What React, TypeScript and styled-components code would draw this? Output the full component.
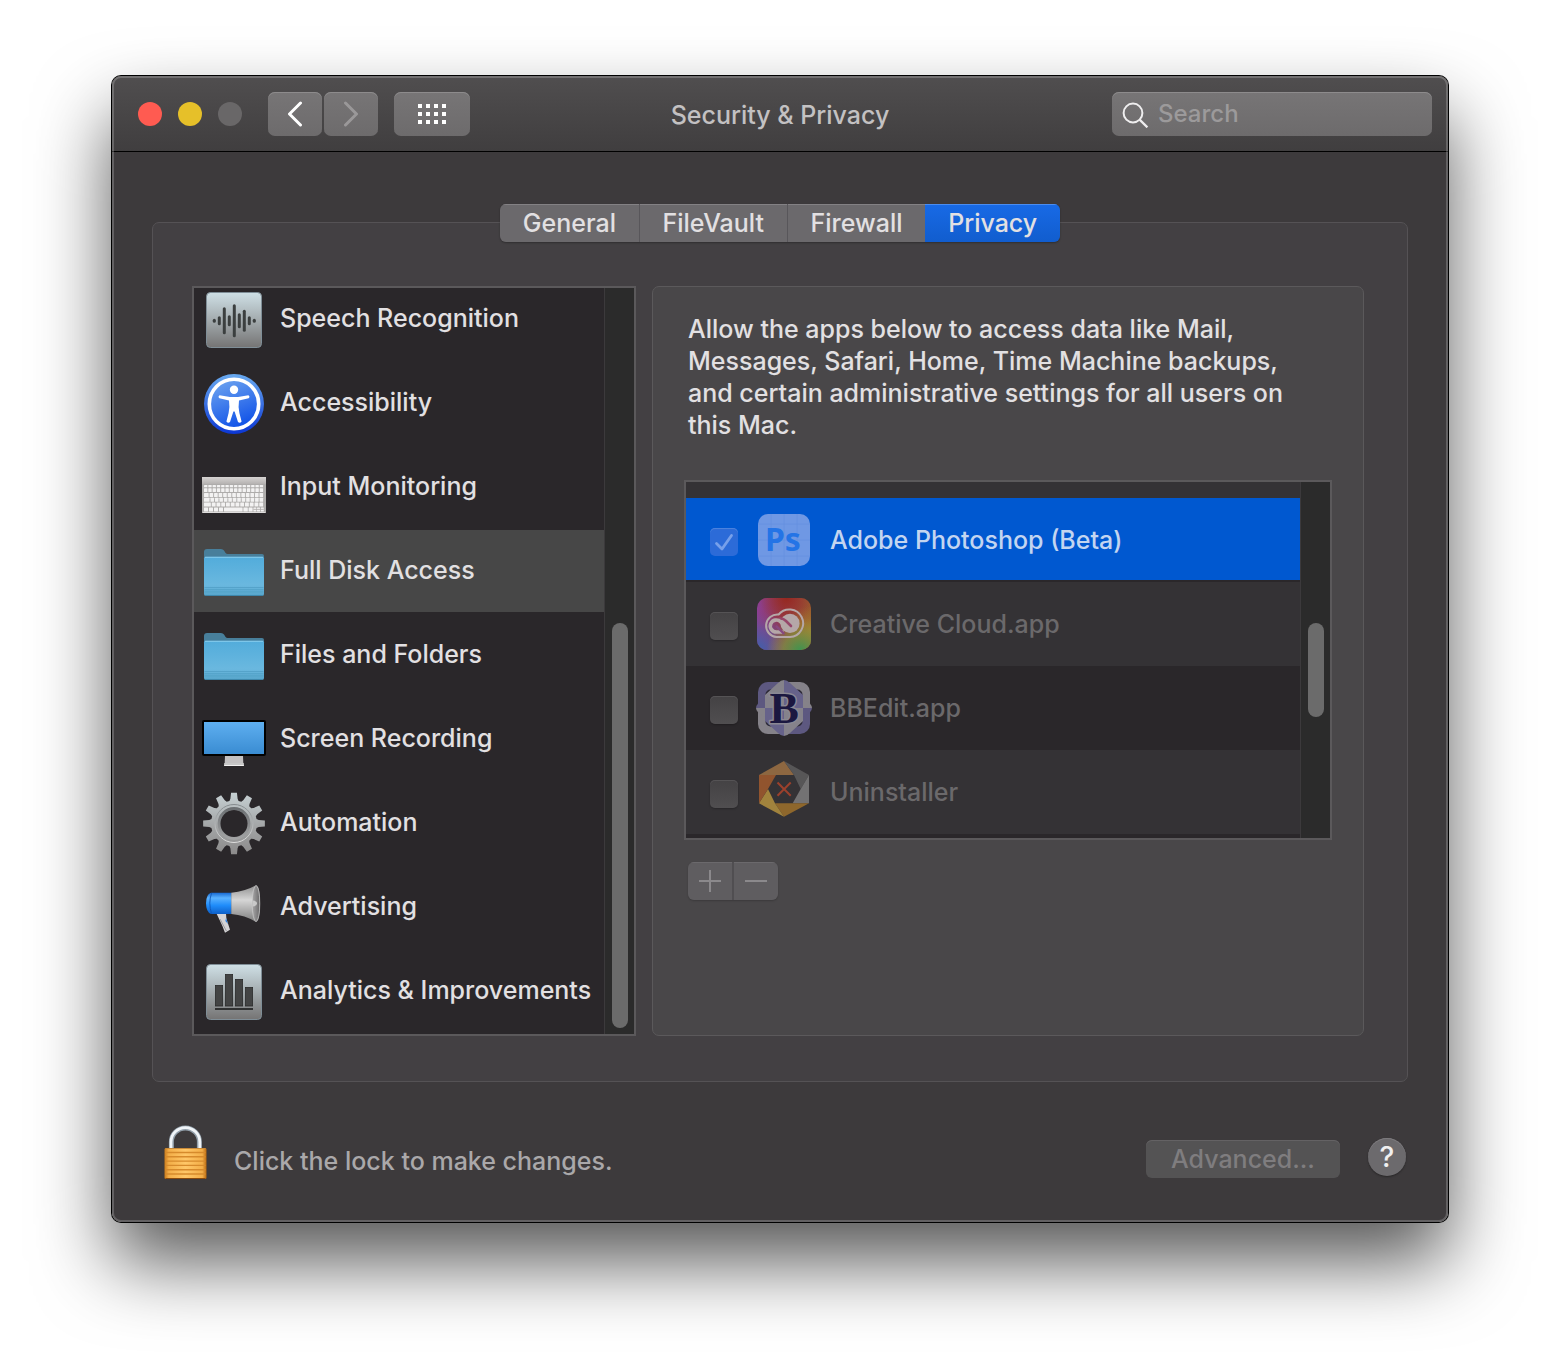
import React, { useState } from "react";
import styled, { createGlobalStyle, css } from "styled-components";

const GlobalStyle = createGlobalStyle`
  *, *::before, *::after { box-sizing: border-box; }
  body { margin: 0; background: #fff; }
  button, input { font: inherit; color: inherit; }
`;

const Desktop = styled.div`
  padding: 76px 112px 148px;
  font-family: Inter, "Liberation Sans", sans-serif;
  font-size: 25px;
  font-weight: 450;
  line-height: 32px;
  color: #e2e0e2;
`;

const Window = styled.section`
  position: relative;
  overflow: hidden;
  border-radius: 9px;
  background: #3d3a3c;
`;

const WindowShadow = styled.div`
  border-radius: 9px;
  box-shadow: 0 0 0 1px #000, 0 40px 76px rgba(0, 0, 0, 0.66);
`;

const WindowEdge = styled.div`
  position: absolute;
  inset: 0;
  border: 2px solid rgba(255, 255, 255, 0.2);
  border-radius: 9px;
  pointer-events: none;
`;

const TitleBar = styled.header`
  display: grid;
  grid-template-columns: 1fr auto 1fr;
  align-items: center;
  padding: 16px 16px 15px;
  border-bottom: 1px solid #000;
  background: linear-gradient(#504e4f, #403e3f);
`;

const TitleLeft = styled.div`
  display: flex;
  align-items: center;
  padding-left: 10px;
`;

const Lights = styled.div`
  display: flex;
  gap: 16px;
  margin-right: 26px;
`;

const Light = styled.button<{ $color: string }>`
  width: 24px;
  height: 24px;
  padding: 0;
  border: 0;
  border-radius: 50%;
  background: ${(p) => p.$color};
`;

const ToolButton = styled.button<{ $wide?: boolean }>`
  display: grid;
  place-items: center;
  width: ${(p) => (p.$wide ? 76 : 54)}px;
  height: 44px;
  padding: 0;
  border: 0;
  border-radius: 7px;
  background: linear-gradient(#777576, #6d6b6c);
  box-shadow: inset 0 1px #8d8b8c;
  margin-left: ${(p) => (p.$wide ? 14 : 0)}px;
`;

const NavGroup = styled.nav`
  display: flex;
  gap: 2px;
`;

const Title = styled.h1`
  margin: 0;
  padding-top: 2px;
  font-size: 25px;
  font-weight: 450;
  color: #c3c1c2;
`;

const SearchField = styled.label`
  display: flex;
  align-items: center;
  justify-self: end;
  gap: 8px;
  width: 320px;
  height: 44px;
  padding-left: 10px;
  border-radius: 7px;
  background: linear-gradient(#777576, #6d6b6c);
  box-shadow: inset 0 1px #8d8b8c;
`;

const SearchInput = styled.input`
  flex: 1;
  min-width: 0;
  padding: 0;
  border: 0;
  outline: 0;
  background: transparent;
  font-size: 24px;
  &::placeholder { color: #9c9a9b; opacity: 1; }
`;

const Body = styled.main`
  padding: 52px 40px 42px;
`;

const Tabs = styled.div`
  position: relative;
  z-index: 1;
  display: flex;
  width: 560px;
  height: 38px;
  margin: 0 auto -20px;
  border-radius: 6px;
  overflow: hidden;
  box-shadow: 0 1px 2px rgba(0, 0, 0, 0.3);
`;

const Tab = styled.button<{ $active: boolean; $joined: boolean }>`
  flex: auto;
  padding: 0;
  border: 0;
  border-right: ${(p) => (p.$joined ? 0 : 1)}px solid #58565a;
  background: #6b696c;
  box-shadow: inset 0 1px #838184;
  ${(p) =>
    p.$active &&
    css`
      border-right: 0;
      background: linear-gradient(#186ae6, #115dce);
      box-shadow: inset 0 1px #4b8df0;
    `}
`;

const Frame = styled.div`
  display: flex;
  gap: 16px;
  padding: 63px 43px 45px 39px;
  border: 1px solid #555255;
  border-radius: 7px;
  background: #434043;
`;

const ListBox = styled.div<{ $height: number; $width?: number }>`
  display: flex;
  flex: none;
  width: ${(p) => (p.$width ? `${p.$width}px` : "auto")};
  height: ${(p) => p.$height}px;
  border: 2px solid #5b595b;
  background: #2a272a;
`;

const Rows = styled.ul`
  display: flex;
  flex: 1;
  flex-direction: column;
  justify-content: flex-end;
  min-width: 0;
  margin: 0;
  padding: 0;
  overflow: hidden;
  list-style: none;
`;

const Track = styled.div<{ $bottom: number }>`
  display: flex;
  flex-direction: column;
  justify-content: flex-end;
  width: 30px;
  padding: 0 6px ${(p) => p.$bottom}px 7px;
  border-left: 1px solid #3c3a3c;
  background: #2b2b2b;
`;

const Thumb = styled.div<{ $length: number }>`
  height: ${(p) => p.$length}px;
  border-radius: 8px;
  background: #6b6b6b;
`;

const Category = styled.button<{ $selected: boolean }>`
  display: flex;
  align-items: center;
  gap: 14px;
  width: 100%;
  height: 82px;
  margin-bottom: 2px;
  padding: 0 0 0 8px;
  border: 0;
  background: ${(p) => (p.$selected ? "#474747" : "transparent")};
  text-align: left;
  white-space: nowrap;
`;

const CategoryItem = styled.li`
  flex: none;
  height: 84px;
`;

const CategoryLabel = styled.span`
  padding-bottom: 2px;
`;

const IconBox = styled.svg`
  flex: none;
  display: block;
  width: 64px;
  height: 64px;
`;

const Panel = styled.section`
  flex: 1;
  min-width: 0;
  padding: 26px 31px;
  border: 1px solid #5b595b;
  border-radius: 7px;
  background: #494749;
`;

const Description = styled.p`
  max-width: 620px;
  margin: 0 0 39px;
  padding-left: 4px;
`;

const AppRow = styled.li<{ $tone: "selected" | "light" | "dark" }>`
  flex: none;
  height: 84px;
  color: ${(p) => (p.$tone === "selected" ? "#c3d5f0" : "#6b696b")};
  background: ${(p) =>
    p.$tone === "selected"
      ? "linear-gradient(#0058d0 82px, #2a272a 82px)"
      : p.$tone === "light"
      ? "#343235"
      : "#2a272a"};
`;

const RowSliver = styled.li<{ $light?: boolean }>`
  flex: none;
  height: ${(p) => (p.$light ? 16 : 4)}px;
  background: ${(p) => (p.$light ? "#343235" : "#2a272a")};
`;

const AppLabel = styled.label`
  display: flex;
  align-items: center;
  height: 100%;
  padding-left: 24px;
`;

const AppName = styled.span`
  padding-left: 14px;
`;

const CheckCell = styled.span`
  display: grid;
  margin: 4px 14px 0 0;
  > * { grid-area: 1 / 1; }
`;

const Checkbox = styled.input`
  appearance: none;
  width: 28px;
  height: 28px;
  margin: 0;
  border-radius: 5px;
  background: linear-gradient(#444244, #504e50);
  box-shadow: inset 0 1px #555355, 0 1px 2px rgba(0, 0, 0, 0.25);
  &:checked {
    background: #2c6bd8;
    box-shadow: inset 0 1px #4a82de;
  }
`;

const CheckMark = styled.svg`
  width: 28px;
  height: 28px;
  pointer-events: none;
`;

const EditButtons = styled.div`
  display: flex;
  width: 90px;
  height: 38px;
  margin: 22px 0 0 4px;
  border-radius: 6px;
  overflow: hidden;
  box-shadow: 0 1px 2px rgba(0, 0, 0, 0.2);
`;

const EditButton = styled.button`
  display: grid;
  flex: 1;
  place-items: center;
  padding: 0;
  border: 0;
  background: #5f5d60;
  box-shadow: inset 0 1px #6b696c;
  & + & { border-left: 2px solid #504e51; }
`;

const Footer = styled.footer`
  display: flex;
  align-items: center;
  padding: 40px 2px 0 10px;
`;

const LockButton = styled.button`
  padding: 0;
  border: 0;
  background: transparent;
  > svg { display: block; }
`;

const LockText = styled.p`
  flex: 1;
  margin: 0;
  padding: 20px 0 0 24px;
  color: #aaa8aa;
`;

const AdvancedButton = styled.button`
  width: 194px;
  height: 38px;
  margin: 16px 28px 0 0;
  padding: 0;
  border: 0;
  border-radius: 6px;
  background: #545354;
  box-shadow: inset 0 1px #646264;
  color: #7f7d7f;
`;

const HelpButton = styled.button`
  width: 38px;
  height: 38px;
  margin-top: 12px;
  padding: 0;
  border: 0;
  border-radius: 50%;
  background: #6c6a6d;
  box-shadow: inset 0 1px #7d7b7e, 0 1px 2px rgba(0, 0, 0, 0.35);
  font-size: 28px;
  color: #f0eff0;
`;

const Tile = ({ id }: { id: string }) => (
  <>
    <defs>
      <linearGradient id={id} x1="0" y1="0" x2="0" y2="1">
        <stop offset="0" stopColor="#cfe0e6" />
        <stop offset="0.5" stopColor="#a3abae" />
        <stop offset="1" stopColor="#757474" />
      </linearGradient>
    </defs>
    <rect x="4.5" y="5.5" width="55" height="55" rx="4" fill={`url(#${id})`} stroke="#7f8e97" />
  </>
);

const waveBars = [
  [12.3, 4], [17.3, 9], [22.3, 27], [27.3, 11], [32.3, 33],
  [37.3, 15], [42.3, 22], [47.3, 9], [52.3, 4],
];

const SpeechIcon = () => (
  <IconBox viewBox="0 0 64 64">
    <Tile id="tile-speech" />
    {waveBars.map(([x, h]) => (
      <rect key={x} x={x - 1.5} y={33.7 - h / 2} width="3" height={h} rx="1.5" fill="#3b3f3f" />
    ))}
  </IconBox>
);

const AccessibilityIcon = () => (
  <IconBox viewBox="0 0 64 64">
    <defs>
      <linearGradient id="acc-out" x1="0" y1="0" x2="0" y2="1">
        <stop offset="0" stopColor="#69aaf0" />
        <stop offset="1" stopColor="#0b36d4" />
      </linearGradient>
      <linearGradient id="acc-in" x1="0" y1="0" x2="0.4" y2="1">
        <stop offset="0" stopColor="#74aaf0" />
        <stop offset="1" stopColor="#1556e8" />
      </linearGradient>
    </defs>
    <circle cx="32" cy="33" r="30" fill="url(#acc-out)" />
    <circle cx="32" cy="33" r="24.7" fill="url(#acc-in)" stroke="#fff" strokeWidth="3.6" />
    <circle cx="32" cy="18.8" r="4.2" fill="#fff" />
    <path d="M17.6 24.2 L28 26 H36 L46.4 24.2 Q48.4 25.6 46.6 27.2 L37 29.6 Q36 36 37.4 42 L39.6 50.4 Q38 52.6 36 51 L32.6 40.6 H31.4 L28 51 Q26 52.6 24.4 50.4 L26.6 42 Q28 36 27 29.6 L17.4 27.2 Q15.6 25.6 17.6 24.2 Z" fill="#fff" />
  </IconBox>
);

const keyRows = [
  { y: 30, h: 2.2, n: 14, off: 0 },
  { y: 33.2, h: 3.9, n: 14, off: 0 },
  { y: 38, h: 3.9, n: 13, off: 1 },
  { y: 42.8, h: 3.9, n: 13, off: 2 },
  { y: 47.6, h: 3.9, n: 12, off: 3 },
];

const KeyboardIcon = () => (
  <IconBox viewBox="0 0 64 64">
    <defs>
      <linearGradient id="kb" x1="0" y1="0" x2="0" y2="1">
        <stop offset="0" stopColor="#d6d3d2" />
        <stop offset="1" stopColor="#b5b2b1" />
      </linearGradient>
    </defs>
    <rect x="0" y="22" width="64" height="36" rx="0.8" fill="#aeacab" />
    <rect x="0" y="22" width="64" height="7" fill="url(#kb)" />
    <rect x="0.5" y="57" width="63" height="1" fill="#dedcdc" />
    {keyRows.map((r) =>
      Array.from({ length: r.n }, (_, i) => {
        const first = i === 0 ? 0 : r.off;
        const step = (60 - r.off) / r.n;
        return (
          <rect
            key={`${r.y}-${i}`}
            x={2 + first + i * step}
            y={r.y}
            width={i === 0 ? step + r.off - 0.9 : step - 0.9}
            height={r.h}
            rx="0.5"
            fill="#f3f2f2"
          />
        );
      })
    )}
    {[[2, 4], [7, 4], [12, 4], [17, 4], [22, 18.6], [41.4, 4.4], [46.6, 4], [51.4, 3], [55, 3], [58.8, 3]].map(([x, w]) => (
      <rect key={x} x={x} y="52.4" width={w} height="4" rx="0.5" fill="#f3f2f2" />
    ))}
    <path d="M51.4 54.4 h10.4" stroke="#aeacab" strokeWidth="0.8" />
  </IconBox>
);

const FolderIcon = ({ id }: { id: string }) => (
  <IconBox viewBox="0 0 64 64">
    <defs>
      <linearGradient id={id} x1="0" y1="0" x2="0" y2="1">
        <stop offset="0" stopColor="#52acdb" />
        <stop offset="0.72" stopColor="#6ab8df" />
        <stop offset="1" stopColor="#57a5ca" />
      </linearGradient>
    </defs>
    <path d="M2 13 q0 -3 3 -3 H19 q2 0 3 1.6 L23.6 14 q0.7 1 2 1 H60 q2 0 2 2 V30 H2 Z" fill="#487f9b" />
    <path d="M2 19.5 q0 -1.7 1.7 -1.7 H60.3 q1.7 0 1.7 1.7 V55 q0 2 -2 2 H4 q-2 0 -2 -2 Z" fill={`url(#${id})`} />
    <path d="M3 18.3 H61" stroke="#8fd0ee" strokeWidth="0.9" />
    <path d="M2.5 48.5 H61.5 M2.5 50.7 H61.5 M2.5 52.9 H61.5" stroke="#4d9cc3" strokeWidth="0.7" />
    <path d="M3 56.5 H61" stroke="#3e87ab" />
  </IconBox>
);

const ScreenIcon = () => (
  <IconBox viewBox="0 0 64 64">
    <defs>
      <linearGradient id="scr" x1="0" y1="0" x2="0" y2="1">
        <stop offset="0" stopColor="#5eaff0" />
        <stop offset="1" stopColor="#3a8cd2" />
      </linearGradient>
    </defs>
    <rect x="0" y="13" width="64" height="36" rx="2" fill="#000" />
    <rect x="2" y="15" width="60" height="32" fill="url(#scr)" />
    <path d="M23 49 H41 L41.3 56 H22.7 Z" fill="#c3c1c2" />
    <path d="M22.3 56 H41.7 L42 59 H22 Z" fill="#f1f0f0" />
    <path d="M22.3 57 H41.7" stroke="#8c8a8b" strokeWidth="0.8" />
  </IconBox>
);

const GearIcon = () => (
  <IconBox viewBox="0 0 64 64">
    <defs>
      <linearGradient id="gear" gradientUnits="userSpaceOnUse" x1="0" y1="2" x2="0" y2="63">
        <stop offset="0" stopColor="#c6d0d3" />
        <stop offset="0.55" stopColor="#a3a5a6" />
        <stop offset="1" stopColor="#8c8b8b" />
      </linearGradient>
      <linearGradient id="gear-rim" x1="0" y1="0" x2="0" y2="1">
        <stop offset="0" stopColor="#83898c" />
        <stop offset="1" stopColor="#dcdcdc" />
      </linearGradient>
      <linearGradient id="gear-bevel" x1="0" y1="0" x2="0" y2="1">
        <stop offset="0" stopColor="#6c7073" />
        <stop offset="1" stopColor="#a2a3a4" />
      </linearGradient>
      <mask id="gear-hole">
        <rect width="64" height="64" fill="#fff" />
        <circle cx="32" cy="32.5" r="13.6" fill="#000" />
      </mask>
    </defs>
    <g mask="url(#gear-hole)">
      <path
        fill="url(#gear)"
        d={
          Array.from({ length: 12 }, (_, i) => {
            const base = (i * Math.PI) / 6 - Math.PI / 2;
            return [[-0.2, 23], [-0.145, 25], [-0.095, 31], [0.095, 31], [0.145, 25], [0.2, 23]]
              .map(([a, r], k) => {
                const x = 32 + r * Math.cos(base + a);
                const y = 32.5 + r * Math.sin(base + a);
                return `${i + k === 0 ? "M" : "L"}${x.toFixed(2)} ${y.toFixed(2)}`;
              })
              .join(" ");
          }).join(" ") + " Z"
        }
      />
      <circle cx="32" cy="32.5" r="19" fill="none" stroke="url(#gear-rim)" strokeWidth="1" />
      <circle cx="32" cy="32.5" r="15" fill="none" stroke="url(#gear-bevel)" strokeWidth="2.8" />
    </g>
  </IconBox>
);

const MegaphoneIcon = () => (
  <IconBox viewBox="0 0 64 64">
    <defs>
      <linearGradient id="mega-blue" x1="0" y1="0" x2="0" y2="1">
        <stop offset="0" stopColor="#1768d0" />
        <stop offset="0.25" stopColor="#5ab2ff" />
        <stop offset="0.6" stopColor="#1f8cfa" />
        <stop offset="1" stopColor="#0d5fc8" />
      </linearGradient>
      <linearGradient id="mega-cone" x1="0" y1="0" x2="0" y2="1">
        <stop offset="0" stopColor="#8f8f8f" />
        <stop offset="0.4" stopColor="#d6d6d6" />
        <stop offset="1" stopColor="#7e7e7e" />
      </linearGradient>
      <linearGradient id="mega-bell" x1="0" y1="0" x2="1" y2="0">
        <stop offset="0" stopColor="#a8a7a8" />
        <stop offset="1" stopColor="#6a696a" />
      </linearGradient>
    </defs>
    <path d="M14.5 38.5 L24 38.5 Q24 43 25.2 46 L28 54.8 L23 57.8 L20.4 51 Z" fill="#d5d4d6" />
    <path d="M24 43 L26 49 L23.4 46 Z" fill="#2a7fe0" />
    <path d="M18 44 L24.4 56" stroke="#8f8e90" strokeWidth="0.8" />
    <path d="M9 17.7 H29.5 V39 H9 Q4 37 4 28.3 Q4 19.5 9 17.7 Z" fill="url(#mega-blue)" />
    <path d="M9.6 18 Q6 28 9.6 38.8" fill="none" stroke="#0f57b8" strokeWidth="0.9" />
    <path d="M29.3 17.7 Q43 16.5 54 10.3 Q58 10.5 58 28.6 Q58 46 54 47 Q43 40 29.3 39 Z" fill="url(#mega-cone)" />
    <ellipse cx="54" cy="28.6" rx="3.8" ry="18" fill="url(#mega-bell)" stroke="#d4d4d4" strokeWidth="0.6" />
    <path d="M50.6 25.6 Q55 26 55 28.6 Q55 31 50.6 31.6 Z" fill="#c9c9c9" />
  </IconBox>
);

const AnalyticsIcon = () => (
  <IconBox viewBox="0 0 64 64">
    <Tile id="tile-analytics" />
    {[[13, 26], [23, 15], [33, 20], [43, 28]].map(([x, y]) => (
      <rect key={x} x={x + 0.4} y={y + 0.4} width="7.2" height={47 - y - 0.4} fill="#434444" stroke="#2b2c2c" strokeWidth="0.8" />
    ))}
    <rect x="13" y="49" width="38" height="2" fill="#303131" />
  </IconBox>
);

const PhotoshopIcon = () => (
  <IconBox viewBox="0 0 64 64">
    <rect x="6" y="6" width="52" height="52" rx="10" fill="#6f98e4" />
    <path d="M19 6 V58 M32 6 V58 M45 6 V58 M6 16 H58 M6 32 H58 M6 48 H58" stroke="#668fdf" strokeWidth="0.8" />
    <text x="13" y="43" fontFamily="'Noto Sans', sans-serif" fontWeight="700" fontSize="32" fill="#2474e6">Ps</text>
  </IconBox>
);

const CreativeCloudIcon = () => (
  <IconBox viewBox="0 0 64 64">
    <defs>
      <linearGradient id="cc-base" x1="0" y1="0" x2="1" y2="0">
        <stop offset="0" stopColor="#8b3f94" />
        <stop offset="0.5" stopColor="#96353c" />
        <stop offset="1" stopColor="#99582c" />
      </linearGradient>
      <radialGradient id="cc-blue" cx="0" cy="1" r="0.75">
        <stop offset="0" stopColor="#3b62ad" />
        <stop offset="0.5" stopColor="#5b569f" stopOpacity="0.7" />
        <stop offset="1" stopColor="#7a4a90" stopOpacity="0" />
      </radialGradient>
      <radialGradient id="cc-green" cx="0.8" cy="1" r="0.62">
        <stop offset="0" stopColor="#3f9450" />
        <stop offset="0.5" stopColor="#7e8c3f" stopOpacity="0.8" />
        <stop offset="1" stopColor="#a08434" stopOpacity="0" />
      </radialGradient>
      <radialGradient id="cc-yellow" cx="1" cy="0.65" r="0.5">
        <stop offset="0" stopColor="#a38b33" />
        <stop offset="1" stopColor="#a0702f" stopOpacity="0" />
      </radialGradient>
      <radialGradient id="cc-red" cx="0.55" cy="0" r="0.5">
        <stop offset="0" stopColor="#96281f" />
        <stop offset="1" stopColor="#96353c" stopOpacity="0" />
      </radialGradient>
    </defs>
    {["cc-base", "cc-red", "cc-yellow", "cc-blue", "cc-green"].map((g) => (
      <rect key={g} x="5" y="6" width="54" height="52" rx="10" fill={`url(#${g})`} />
    ))}
    <path
      d="M24.5 45 A11.3 11.3 0 1 1 26.6 22.5 A13.8 13.8 0 1 1 38 45 Z"
      fill="none"
      stroke="#b5a7a8"
      strokeWidth="2"
    />
    <circle cx="38" cy="31.4" r="9.6" fill="#b5a7a8" />
    <path d="M27.6 26.6 Q31 26 34 29 L39 34" fill="none" stroke="#96466a" strokeWidth="2.6" strokeLinecap="round" />
    <path
      d="M30 40 H24.4 A6 6 0 1 1 28.6 29.8 L37 38.4"
      fill="none"
      stroke="#b5a7a8"
      strokeWidth="3.6"
      strokeLinecap="round"
      strokeLinejoin="round"
    />
    <path d="M24.6 34.4 L31.6 41.4" fill="none" stroke="#864880" strokeWidth="2.2" strokeLinecap="round" />
  </IconBox>
);

const BBEditIcon = () => (
  <IconBox viewBox="0 0 64 64">
    <defs>
      <clipPath id="bb-a"><path d="M0 0 H32 V32 H0 Z M32 32 H64 V64 H32 Z" /></clipPath>
      <clipPath id="bb-b"><path d="M32 0 H64 V32 H32 Z M0 32 H32 V64 H0 Z" /></clipPath>
    </defs>
    <g fill="#5d5880" clipPath="url(#bb-a)">
      <rect x="6" y="6" width="52" height="52" rx="10" />
      <ellipse cx="32" cy="32" rx="28" ry="12" />
    </g>
    <g fill="#858289" clipPath="url(#bb-b)">
      <rect x="6" y="6" width="52" height="52" rx="10" />
      <ellipse cx="32" cy="32" rx="28" ry="12" />
    </g>
    <rect x="13.5" y="13.5" width="37" height="37" rx="5" fill="#2b2835" />
    <g clipPath="url(#bb-b)">
      <path d="M32 4 Q35 4 38 7 L51 19 V45 L38 57 Q35 60 32 60 Q29 60 26 57 L13 45 V19 L26 7 Q29 4 32 4 Z" fill="#66628a" />
    </g>
    <g clipPath="url(#bb-a)">
      <path d="M32 4 Q35 4 38 7 L51 19 V45 L38 57 Q35 60 32 60 Q29 60 26 57 L13 45 V19 L26 7 Q29 4 32 4 Z" fill="#85828b" />
    </g>
    <text
      x="17.5"
      y="46.5"
      fontFamily="'Liberation Serif', serif"
      fontWeight="700"
      fontSize="44"
      fill="#1b1740"
      stroke="#8b8894"
      strokeWidth="3"
      paintOrder="stroke"
    >
      B
    </text>
  </IconBox>
);

const UninstallerIcon = () => (
  <IconBox viewBox="0 0 64 64">
    <path d="M7 15 L32 1 L42 15 Z" fill="#8d6741" />
    <path d="M32 1 L57 15 L48.7 29 L42 15 Z" fill="#575657" />
    <path d="M57 15 V43.3 H40.7 L48.7 29 Z" fill="#737273" />
    <path d="M57 43.3 L32 56.7 L23 43.3 Z" fill="#8e672c" />
    <path d="M32 56.7 L7 43.3 L16 29 L23 43.3 Z" fill="#a1833d" />
    <path d="M7 43.3 V15 H24 L16 29 Z" fill="#91542e" />
    <path d="M25.5 22.5 L38.7 35.7 M38.7 22.5 L25.5 35.7" stroke="#9c402c" strokeWidth="2" />
  </IconBox>
);

const categories = [
  { name: "Speech Recognition", icon: <SpeechIcon /> },
  { name: "Accessibility", icon: <AccessibilityIcon /> },
  { name: "Input Monitoring", icon: <KeyboardIcon /> },
  { name: "Full Disk Access", icon: <FolderIcon id="folder-disk" /> },
  { name: "Files and Folders", icon: <FolderIcon id="folder-files" /> },
  { name: "Screen Recording", icon: <ScreenIcon /> },
  { name: "Automation", icon: <GearIcon /> },
  { name: "Advertising", icon: <MegaphoneIcon /> },
  { name: "Analytics & Improvements", icon: <AnalyticsIcon /> },
];

const apps = [
  { name: "Adobe Photoshop (Beta)", icon: <PhotoshopIcon />, allowed: true, tone: "selected" as const },
  { name: "Creative Cloud.app", icon: <CreativeCloudIcon />, allowed: false, tone: "light" as const },
  { name: "BBEdit.app", icon: <BBEditIcon />, allowed: false, tone: "dark" as const },
  { name: "Uninstaller", icon: <UninstallerIcon />, allowed: false, tone: "light" as const },
];

const tabs = ["General", "FileVault", "Firewall", "Privacy"];

export default function App() {
  const [tab, setTab] = useState("Privacy");
  const [category, setCategory] = useState("Full Disk Access");

  return (
    <Desktop>
      <GlobalStyle />
      <WindowShadow>
        <Window>
          <TitleBar>
            <TitleLeft>
              <Lights>
                <Light $color="#ff5b51" aria-label="Close" />
                <Light $color="#e6c029" aria-label="Minimize" />
                <Light $color="#696768" aria-label="Zoom" disabled />
              </Lights>
              <NavGroup>
                <ToolButton aria-label="Back">
                  <svg width="16" height="26" viewBox="0 0 16 26" fill="none" stroke="#fff" strokeWidth="3" strokeLinecap="round" strokeLinejoin="round">
                    <path d="M13.5 2 L2.5 13 L13.5 24" />
                  </svg>
                </ToolButton>
                <ToolButton aria-label="Forward" disabled>
                  <svg width="16" height="26" viewBox="0 0 16 26" fill="none" stroke="#9a9899" strokeWidth="3" strokeLinecap="round" strokeLinejoin="round">
                    <path d="M2.5 2 L13.5 13 L2.5 24" />
                  </svg>
                </ToolButton>
                <ToolButton $wide aria-label="Show All">
                  <svg width="28" height="20" viewBox="0 0 28 20" fill="#fff">
                    {[0, 8, 16].map((y) => [0, 8, 16, 24].map((x) => <rect key={`${x}-${y}`} x={x} y={y} width="4" height="4" />))}
                  </svg>
                </ToolButton>
              </NavGroup>
            </TitleLeft>
            <Title>Security &amp; Privacy</Title>
            <SearchField>
              <svg width="28" height="28" viewBox="0 0 28 28" fill="none" stroke="#efeeef" strokeWidth="2">
                <circle cx="11" cy="13" r="9.4" />
                <path d="M17.6 19.6 L25.4 27.4" strokeWidth="2.2" />
              </svg>
              <SearchInput type="search" placeholder="Search" aria-label="Search" />
            </SearchField>
          </TitleBar>

          <Body>
            <Tabs role="tablist">
              {tabs.map((name, i) => (
                <Tab
                  key={name}
                  role="tab"
                  aria-selected={tab === name}
                  $active={tab === name}
                  $joined={tabs[i + 1] === tab}
                  onClick={() => setTab(name)}
                >
                  {name}
                </Tab>
              ))}
            </Tabs>
            <Frame>
              <ListBox $height={750} $width={444}>
                <Rows>
                  {categories.map((c) => (
                    <CategoryItem key={c.name}>
                      <Category $selected={c.name === category} onClick={() => setCategory(c.name)}>
                        {c.icon}
                        <CategoryLabel>{c.name}</CategoryLabel>
                      </Category>
                    </CategoryItem>
                  ))}
                </Rows>
                <Track $bottom={6}>
                  <Thumb $length={405} />
                </Track>
              </ListBox>
              <Panel>
                <Description>
                  Allow the apps below to access data like Mail, Messages, Safari, Home, Time Machine backups, and
                  certain administrative settings for all users on this Mac.
                </Description>
                <ListBox $height={360}>
                  <Rows>
                    <RowSliver $light />
                    {apps.map((a) => (
                      <AppRow key={a.name} $tone={a.tone}>
                        <AppLabel>
                          <CheckCell>
                            <Checkbox type="checkbox" defaultChecked={a.allowed} disabled />
                            {a.allowed && (
                              <CheckMark viewBox="0 0 28 28" fill="none" stroke="#77a0ea" strokeWidth="2.8" strokeLinecap="round" strokeLinejoin="round">
                                <path d="M6.5 15.5 L12 21 L21.5 7.5" />
                              </CheckMark>
                            )}
                          </CheckCell>
                          {a.icon}
                          <AppName>{a.name}</AppName>
                        </AppLabel>
                      </AppRow>
                    ))}
                    <RowSliver />
                  </Rows>
                  <Track $bottom={121}>
                    <Thumb $length={94} />
                  </Track>
                </ListBox>
                <EditButtons>
                  <EditButton aria-label="Add" disabled>
                    <svg width="22" height="22" viewBox="0 0 22 22" stroke="#8b898c" strokeWidth="2">
                      <path d="M11 0 V22 M0 11 H22" />
                    </svg>
                  </EditButton>
                  <EditButton aria-label="Remove" disabled>
                    <svg width="22" height="22" viewBox="0 0 22 22" stroke="#8b898c" strokeWidth="2">
                      <path d="M0 11 H22" />
                    </svg>
                  </EditButton>
                </EditButtons>
              </Panel>
            </Frame>
            <Footer>
              <LockButton aria-label="Unlock">
                <svg width="48" height="58" viewBox="0 0 48 58">
                  <defs>
                    <linearGradient id="lock-body" x1="0" y1="0" x2="1" y2="0">
                      <stop offset="0" stopColor="#c87a1c" />
                      <stop offset="0.1" stopColor="#f3ae48" />
                      <stop offset="0.5" stopColor="#ffc768" />
                      <stop offset="0.9" stopColor="#f3ae48" />
                      <stop offset="1" stopColor="#b8680f" />
                    </linearGradient>
                  </defs>
                  <path d="M9.4 27 V20 A14 14 0 0 1 37.4 20 V27" fill="none" stroke="#93a0ab" strokeWidth="5" />
                  <path d="M9 27 V20 A14.4 14.4 0 0 1 37.8 20 V27" fill="none" stroke="#f0f4f8" strokeWidth="2.8" />
                  <rect x="2.5" y="26" width="42" height="31" rx="1.5" fill="url(#lock-body)" />
                  <path d="M3.5 30.5 H43.5 M3.5 34.8 H43.5 M3.5 39.1 H43.5 M3.5 43.4 H43.5 M3.5 47.7 H43.5 M3.5 52 H43.5" stroke="#d68a2c" strokeWidth="1.4" />
                  <path d="M3.5 56.5 H43.5" stroke="#8a4a0c" />
                  <path d="M3.5 26.5 H43.5" stroke="#c98a38" />
                </svg>
              </LockButton>
              <LockText>Click the lock to make changes.</LockText>
              <AdvancedButton disabled>Advanced...</AdvancedButton>
              <HelpButton aria-label="Help">?</HelpButton>
            </Footer>
          </Body>
          <WindowEdge />
        </Window>
      </WindowShadow>
    </Desktop>
  );
}
